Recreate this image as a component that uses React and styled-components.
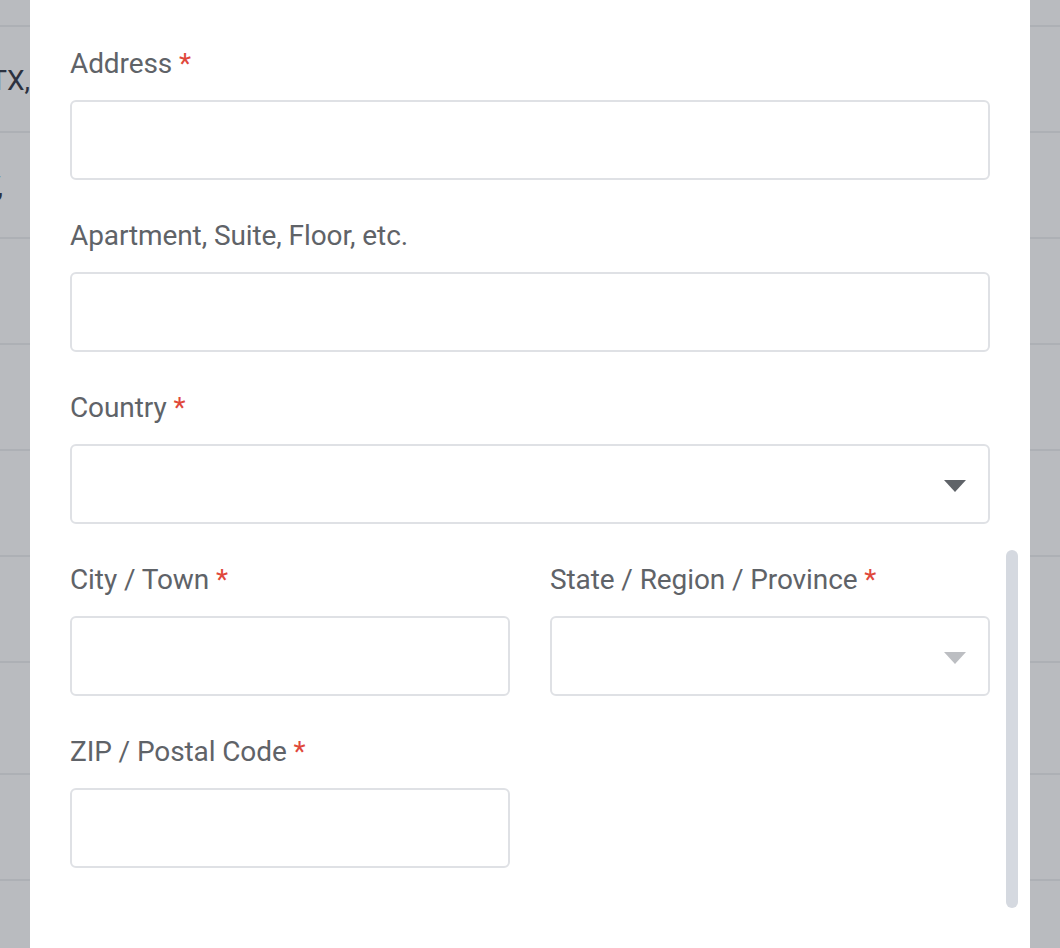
import React from 'react';
import styled, { createGlobalStyle } from 'styled-components';

const Global = createGlobalStyle`
  html, body {
    margin: 0;
    padding: 0;
    height: 100%;
    overflow: hidden;
  }
  body {
    font-family: Roboto, "Liberation Sans", Arial, sans-serif;
    background: #b9bbbf;
  }
`;

const rows = [
  { text: 'Austin, TX,', shift: 0 },
  { text: 'Reno, NV,', shift: 27 },
  { text: '', shift: 0 },
  { text: '', shift: 0 },
  { text: '', shift: 0 },
  { text: '', shift: 0 },
  { text: '', shift: 0 },
  { text: '', shift: 0 },
  { text: '', shift: 0 },
];

const App = () => {
  return (
    <>
      <Global />
      <Page>
        <Table>
          <FirstLine />
          {rows.map((r, i) => (
            <Row key={i} h={i === 6 ? 112 : 106}>
              <Cell shift={r.shift}>
                <span>{r.text}</span>
              </Cell>
            </Row>
          ))}
        </Table>
        <Modal>
          <Form>
            <Field>
              <Label>Address <Req>*</Req></Label>
              <Input />
            </Field>
            <Field>
              <Label>Apartment, Suite, Floor, etc.</Label>
              <Input />
            </Field>
            <Field>
              <Label>Country <Req>*</Req></Label>
              <Select>
                <Caret />
              </Select>
            </Field>
            <Pair>
              <Field>
                <Label>City / Town <Req>*</Req></Label>
                <Input />
              </Field>
              <Field>
                <Label>State / Region / Province <Req>*</Req></Label>
                <Select>
                  <Caret muted />
                </Select>
              </Field>
            </Pair>
            <Pair>
              <Field>
                <Label>ZIP / Postal Code <Req>*</Req></Label>
                <Input />
              </Field>
            </Pair>
          </Form>
          <Thumb />
        </Modal>
      </Page>
    </>
  );
};
export default App;

const Page = styled.div`
  position: relative;
  width: 1060px;
  height: 948px;
  overflow: hidden;
  background: #b9bbbf;
`;

const Table = styled.div`
  display: flex;
  flex-direction: column;
`;

const FirstLine = styled.div`
  height: 25px;
  border-bottom: 2px solid #adb0b5;
`;

const Row = styled.div`
  height: ${p => p.h - 2}px;
  border-bottom: 2px solid #adb0b5;
  display: flex;
  align-items: center;
`;

const Cell = styled.div`
  width: ${p => 30 - p.shift}px;
  display: flex;
  justify-content: flex-end;
  white-space: nowrap;
  font-size: 28px;
  color: #2c3240;
  margin-top: 2px;
  span {
    flex-shrink: 0;
  }
`;

const Modal = styled.div`
  position: absolute;
  left: 30px;
  top: 0;
  width: 1000px;
  bottom: 0;
  background: #ffffff;
`;

const Form = styled.div`
  padding: 45px 40px 0 40px;
  display: flex;
  flex-direction: column;
  gap: 37px;
`;

const Pair = styled.div`
  display: grid;
  grid-template-columns: 440px 440px;
  column-gap: 40px;
`;

const Field = styled.div`
  display: flex;
  flex-direction: column;
  gap: 17px;
`;

const Label = styled.div`
  font-size: 28px;
  line-height: 38px;
  color: #5f6368;
  letter-spacing: -0.1px;
`;

const Req = styled.span`
  color: #e0483b;
`;

const Input = styled.div`
  height: 80px;
  box-sizing: border-box;
  border: 2px solid #dfe1e5;
  border-radius: 6px;
  background: #fff;
`;

const Select = styled(Input)`
  display: flex;
  align-items: center;
  justify-content: flex-end;
  padding-right: 22px;
`;

const Caret = styled.div`
  width: 0;
  height: 0;
  border-left: 11px solid transparent;
  border-right: 11px solid transparent;
  border-top: 12px solid ${p => (p.muted ? '#bcbec2' : '#5f6368')};
  margin-top: 3px;
`;

const Thumb = styled.div`
  position: absolute;
  left: 976px;
  top: 550px;
  width: 12px;
  height: 358px;
  border-radius: 6px;
  background: #d5d9e0;
`;
